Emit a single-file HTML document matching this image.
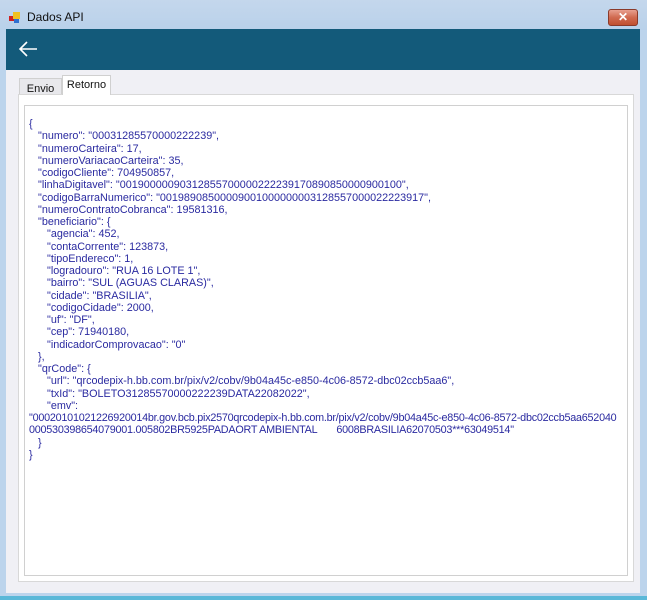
<!DOCTYPE html>
<html><head><meta charset="utf-8"><style>
*{margin:0;padding:0;box-sizing:border-box}
body{width:647px;height:600px;overflow:hidden;background:#bcd4ec;font-family:Tahoma,"Liberation Sans",sans-serif;position:relative}
.tb{position:absolute;left:0;top:0;width:647px;height:30px;background:linear-gradient(#c4d7ec,#b9d1ea)}
.title{position:absolute;left:27px;top:10px;font-size:12px;color:#111}
.icon{position:absolute;left:9px;top:12px;width:12px;height:12px}
.close{position:absolute;left:608px;top:9px;width:30px;height:17px;border:1px solid #8a3a2a;border-radius:3px;background:linear-gradient(#e8a090,#d06a50 50%,#c05030);color:#fff;font-size:12px;font-weight:bold;text-align:center;line-height:15px}
.hdr{position:absolute;left:6px;top:29px;width:634px;height:41px;background:#135a7a}
.main{position:absolute;left:6px;top:70px;width:634px;height:523px;background:#f0f0f5}
.tab{position:absolute;font-size:11px;color:#111;padding:4px 0 0 0;text-align:center}
.panel{position:absolute;left:18px;top:94px;width:616px;height:488px;background:#fff;border:1px solid #d8d8d8}
.box{position:absolute;left:24px;top:105px;width:604px;height:471px;background:#fff;border:1px solid #d0d0d0}
.txt{position:absolute;left:29px;top:118px;font-family:Tahoma,"Liberation Sans",sans-serif;font-size:10.8px;letter-spacing:0;line-height:12.25px;color:#2a2aa0;white-space:pre}
.lg{letter-spacing:-0.24px}
.bot{position:absolute;left:0;top:596px;width:647px;height:4px;background:#5ab8d8}
</style></head><body>
<div class="tb"></div>
<svg class="icon" viewBox="0 0 12 12"><rect x="0" y="4" width="5" height="5" fill="#d02020"/><rect x="4" y="0" width="7" height="7" fill="#f0c020"/><rect x="5" y="7" width="5" height="4" fill="#3070d0"/></svg>
<div class="title">Dados API</div>
<div class="close">✕</div>
<div class="hdr"><svg style="position:absolute;left:12px;top:11px" width="20" height="18" viewBox="0 0 20 18"><path d="M19 9H2M9 2L2 9l7 7" stroke="#fff" stroke-width="1.6" fill="none"/></svg></div>
<div class="main"></div>
<div class="tab" style="left:19px;top:78px;width:43px;height:17px;background:#e8e8ec;border:1px solid #d0d0d0;border-bottom:none">Envio</div>
<div class="panel"></div>
<div class="tab" style="left:62px;top:75px;width:49px;height:20px;background:#fff;border:1px solid #d0d0d0;border-bottom:none;padding-top:3px">Retorno</div>
<div class="box"></div>
<div class="txt">{
   "numero": "00031285570000222239",
   "numeroCarteira": 17,
   "numeroVariacaoCarteira": 35,
   "codigoCliente": 704950857,
   "linhaDigitavel": "00190000090312855700000222239170890850000900100",
   "codigoBarraNumerico": "00198908500009001000000003128557000022223917",
   "numeroContratoCobranca": 19581316,
   "beneficiario": {
      "agencia": 452,
      "contaCorrente": 123873,
      "tipoEndereco": 1,
      "logradouro": "RUA 16 LOTE 1",
      "bairro": "SUL (AGUAS CLARAS)",
      "cidade": "BRASILIA",
      "codigoCidade": 2000,
      "uf": "DF",
      "cep": 71940180,
      "indicadorComprovacao": "0"
   },
   "qrCode": {
      "url": "qrcodepix-h.bb.com.br/pix/v2/cobv/9b04a45c-e850-4c06-8572-dbc02ccb5aa6",
      "txId": "BOLETO31285570000222239DATA22082022",
      "emv":
<span class="lg">"00020101021226920014br.gov.bcb.pix2570qrcodepix-h.bb.com.br/pix/v2/cobv/9b04a45c-e850-4c06-8572-dbc02ccb5aa652040</span>
<span class="lg">000530398654079001.005802BR5925PADAORT AMBIENTAL       6008BRASILIA62070503***63049514"</span>
   }
}</div>
<div class="bot"></div>
</body></html>
